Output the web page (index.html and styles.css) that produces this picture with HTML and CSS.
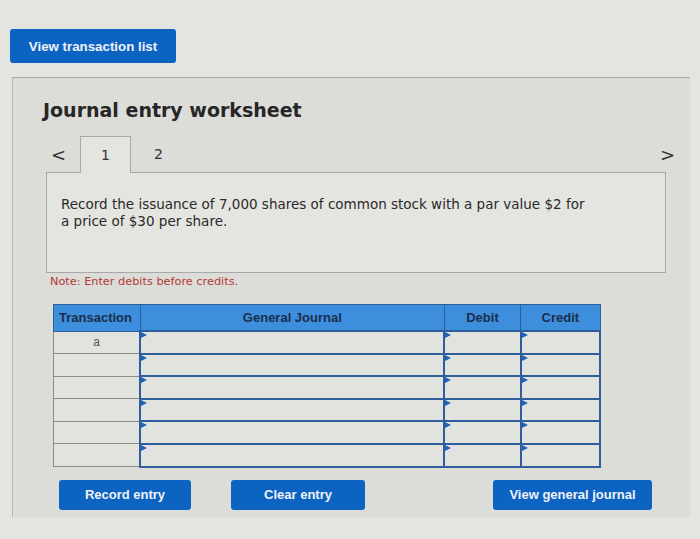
FILE: index.html
```html
<!DOCTYPE html>
<html lang="en">
<head>
  <meta charset="UTF-8">
  <title>Journal entry worksheet</title>
  <link rel="stylesheet" href="styles.css">
</head>
<body>

  <button class="btn btn-top">View transaction list</button>

  <div class="panel">
    <h1 class="title">Journal entry worksheet</h1>

    <div class="tabs">
      <span class="arrow">&lt;</span>
      <span class="tab active">1</span>
      <span class="tab">2</span>
      <span class="spacer"></span>
      <span class="arrow">&gt;</span>
    </div>

    <div class="question">
      Record the issuance of 7,000 shares of common stock with a par value $2 for<br>
      a price of $30 per share.
    </div>

    <p class="note">Note: Enter debits before credits.</p>

    <table class="journal">
      <thead>
        <tr>
          <th class="col-tr">Transaction</th>
          <th class="col-gj">General Journal</th>
          <th class="col-dr">Debit</th>
          <th class="col-cr">Credit</th>
        </tr>
      </thead>
      <tbody>
        <tr><td class="tr">a</td><td class="in"></td><td class="in"></td><td class="in"></td></tr>
        <tr><td class="tr"></td><td class="in"></td><td class="in"></td><td class="in"></td></tr>
        <tr><td class="tr"></td><td class="in"></td><td class="in"></td><td class="in"></td></tr>
        <tr><td class="tr"></td><td class="in"></td><td class="in"></td><td class="in"></td></tr>
        <tr><td class="tr"></td><td class="in"></td><td class="in"></td><td class="in"></td></tr>
        <tr><td class="tr"></td><td class="in"></td><td class="in"></td><td class="in"></td></tr>
      </tbody>
    </table>

    <div class="actions">
      <button class="btn btn-record">Record entry</button>
      <button class="btn btn-clear">Clear entry</button>
      <span class="spacer"></span>
      <button class="btn btn-view">View general journal</button>
    </div>
  </div>

</body>
</html>
```

FILE: styles.css
```css
body {
  margin: 0;
  background-color: #e4e4e0;
  font-family: "DejaVu Sans", Verdana, sans-serif;
  color: #222;
}
.btn {
  border: none;
  border-radius: 3px;
  background-color: #0d63c2;
  color: #eef2f8;
  font-family: "Liberation Sans", Arial, sans-serif;
  font-weight: bold;
  font-size: 13px;
  cursor: pointer;
}
.btn-top {
  display: block;
  margin: 29px 0 0 10px;
  width: 166px;
  height: 34px;
  font-size: 13.3px;
}
.panel {
  margin: 14px 10px 0 12px;
  height: 440px;
  box-sizing: border-box;
  background-color: #dcdcd8;
  border-top: 1px solid #a4a4a2;
  border-left: 1px solid #b4b4b0;
  padding: 19px 0 0 30px;
}
.title {
  margin: 0;
  font-size: 19px;
  line-height: 26px;
  font-weight: bold;
  color: #262626;
}
.tabs {
  display: flex;
  align-items: center;
  margin-top: 13px;
  height: 36px;
  padding-right: 10px;
}
.arrow {
  width: 20px;
  margin-left: 8px;
  font-size: 18px;
  color: #333;
}
.tab {
  width: 51px;
  height: 36px;
  line-height: 36px;
  text-align: center;
  font-size: 14px;
  color: #333;
}
.tab.active {
  margin-left: 9px;
  box-sizing: border-box;
  background-color: #e4e4e0;
  border: 1px solid #a8a8a6;
  border-bottom: none;
  position: relative;
  z-index: 1;
  height: 37px;
  margin-bottom: -1px;
}
.tab + .tab {
  margin-left: 2px;
}
.spacer {
  flex: 1;
}
.question {
  margin-left: 3px;
  width: 620px;
  height: 101px;
  box-sizing: border-box;
  background-color: #e4e4e0;
  border: 1px solid #a8a8a6;
  padding: 23px 0 0 14px;
  font-size: 13.5px;
  line-height: 17px;
  color: #2a2a2a;
}
.note {
  margin: 1px 0 0 7px;
  font-size: 11.3px;
  line-height: 16px;
  color: #b33a34;
}
.journal {
  margin: 14px 0 0 10px;
  border-collapse: collapse;
  width: 548px;
  font-family: "Liberation Sans", Arial, sans-serif;
}
.journal th {
  height: 25px;
  padding: 0;
  background-color: #3d8fdd;
  border: 1px solid #2f609e;
  color: #1c2d4a;
  font-size: 13px;
  font-weight: bold;
}
.journal th.col-tr {
  width: 81px;
  text-align: left;
  padding-left: 5px;
}
.col-gj { width: 307px; }
.col-dr { width: 76px; }
.col-cr { width: 79px; }
.journal td {
  height: 20.6px;
  padding: 0;
  background-color: #e2e2de;
}
.journal td.tr {
  border: 1px solid #8a8a88;
  text-align: center;
  font-size: 12px;
  color: #555;
}
.journal td.in {
  border: 2px solid #2f5e9c;
  position: relative;
}
.journal td.in::before {
  content: "";
  position: absolute;
  top: 0;
  left: 0;
  border-top: 3px solid transparent;
  border-bottom: 3px solid transparent;
  border-left: 6px solid #1f63b8;
}
.actions {
  display: flex;
  align-items: center;
  margin: 12px 0 0 16px;
  width: 593px;
}
.actions .btn {
  height: 30px;
}
.btn-record { width: 132px; }
.btn-clear { width: 134px; margin-left: 40px; }
.btn-view { width: 159px; }
```
